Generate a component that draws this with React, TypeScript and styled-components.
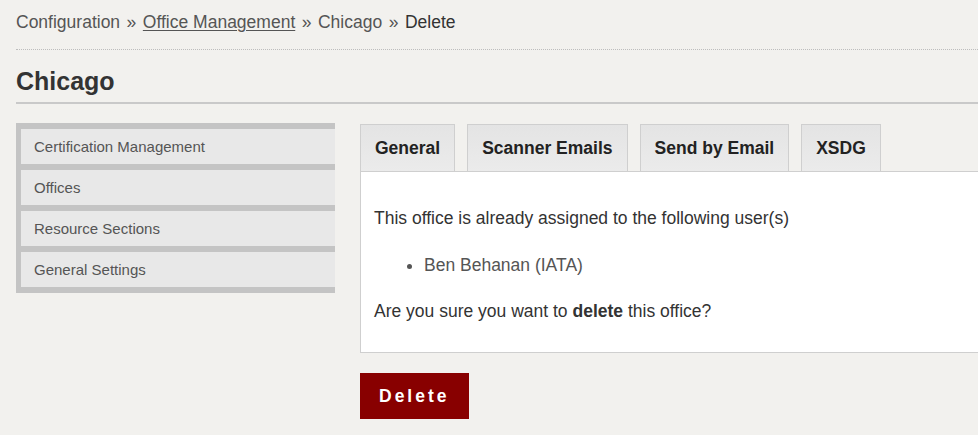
import React from "react";
import styled, { createGlobalStyle } from "styled-components";

const GlobalStyle = createGlobalStyle`
  html, body {
    margin: 0;
    padding: 0;
    background: #f2f1ee;
    overflow: hidden;
  }
  body {
    font-family: "Liberation Sans", Arial, sans-serif;
    color: #333;
  }
`;

const Page = styled.div`
  width: 1000px;
  padding-left: 16px;
  box-sizing: border-box;
`;

const Breadcrumb = styled.nav`
  padding: 12px 0 17px;
  font-size: 17.5px;
  line-height: 20px;
  color: #555;
  border-bottom: 1px dotted #bdbdbd;
`;

const Crumb = styled.a<{ $current?: boolean; $link?: boolean }>`
  color: ${(p) => (p.$current ? "#333" : "#555")};
  text-decoration: ${(p) => (p.$link ? "underline" : "none")};
  text-underline-offset: 2px;
`;

const Sep = styled.span`
  margin: 0 6.5px;
  color: #555;
`;

const Heading = styled.h1`
  margin: 16px 0 0;
  padding-bottom: 6px;
  font-size: 25px;
  line-height: 30px;
  font-weight: bold;
  color: #333;
  border-bottom: 2px solid #c9c9c9;
`;

const Body = styled.div`
  display: flex;
  align-items: flex-start;
  gap: 25px;
  margin-top: 19px;
`;

const SideNav = styled.ul`
  list-style: none;
  margin: 0;
  width: 319px;
  box-sizing: border-box;
  padding: 6px 0 6px 5px;
  background: #c4c4c4;
  display: flex;
  flex-direction: column;
  gap: 6px;
`;

const NavItem = styled.li`
  height: 35px;
  display: flex;
  align-items: center;
  padding-left: 13px;
  background: #e8e8e8;
  font-size: 15px;
  color: #555;
`;

const Main = styled.div`
  flex: 1;
  margin-top: 1px;
`;

const TabBar = styled.div`
  display: flex;
  gap: 12px;
  align-items: flex-end;
`;

const Tab = styled.button`
  height: 48px;
  padding: 0 14px;
  margin-bottom: -1px;
  border: 1px solid #cfcfcf;
  background: linear-gradient(#e4e4e4, #ebebeb);
  font-family: "Liberation Sans", Arial, sans-serif;
  font-size: 17.5px;
  font-weight: bold;
  color: #222;
  cursor: pointer;
`;

const Panel = styled.div`
  background: #fff;
  border: 1px solid #cfcfcf;
  padding: 34px 13px 29px;
  font-size: 17.5px;
  line-height: 24px;
  color: #333;
`;

const Para = styled.p<{ $gap?: number }>`
  margin: 0 0 ${(p) => p.$gap ?? 0}px;
`;

const UserList = styled.ul`
  margin: 0 0 22px;
  padding-left: 50px;
  color: #555;
`;

const DeleteButton = styled.button`
  margin-top: 20px;
  height: 46px;
  padding: 0 19px;
  border: none;
  background: #880000;
  color: #fff;
  font-family: "Liberation Sans", Arial, sans-serif;
  font-size: 17.5px;
  font-weight: bold;
  letter-spacing: 3px;
  cursor: pointer;
`;

const navItems = [
  "Certification Management",
  "Offices",
  "Resource Sections",
  "General Settings",
];

const tabs = ["General", "Scanner Emails", "Send by Email", "XSDG"];

export default function App() {
  return (
    <>
      <GlobalStyle />
      <Page>
        <Breadcrumb>
          <Crumb>Configuration</Crumb>
          <Sep>»</Sep>
          <Crumb $link href="#">
            Office Management
          </Crumb>
          <Sep>»</Sep>
          <Crumb>Chicago</Crumb>
          <Sep>»</Sep>
          <Crumb $current>Delete</Crumb>
        </Breadcrumb>
        <Heading>Chicago</Heading>
        <Body>
          <SideNav>
            {navItems.map((item) => (
              <NavItem key={item}>{item}</NavItem>
            ))}
          </SideNav>
          <Main>
            <TabBar>
              {tabs.map((t) => (
                <Tab key={t}>{t}</Tab>
              ))}
            </TabBar>
            <Panel>
              <Para $gap={23}>This office is already assigned to the following user(s)</Para>
              <UserList>
                <li>Ben Behanan (IATA)</li>
              </UserList>
              <Para>
                Are you sure you want to <b>delete</b> this office?
              </Para>
            </Panel>
            <DeleteButton>Delete</DeleteButton>
          </Main>
        </Body>
      </Page>
    </>
  );
}
